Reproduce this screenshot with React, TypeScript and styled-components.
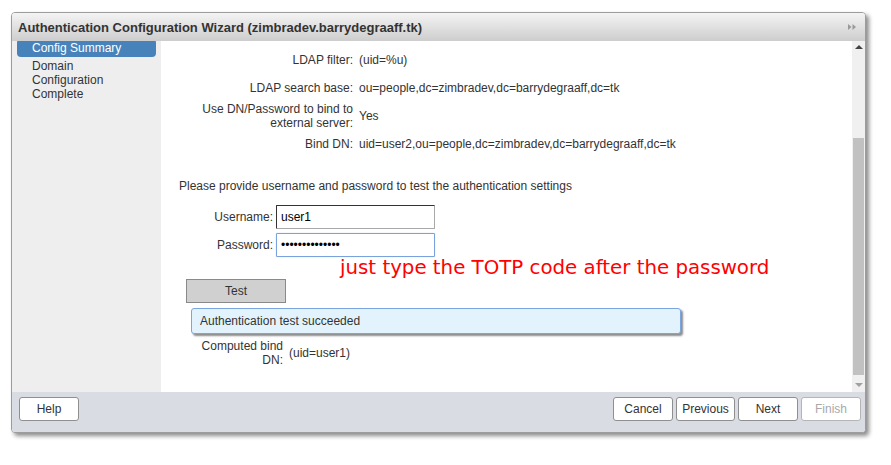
import React, { useEffect, useRef } from "react";
import styled, { createGlobalStyle } from "styled-components";

const Global = createGlobalStyle`
  html, body { margin: 0; padding: 0; background: #fff; }
  body { font-family: "Liberation Sans", Arial, sans-serif; font-size: 12px; color: #333; }
`;

const Page = styled.div`
  width: 891px;
  height: 465px;
  padding: 12px 0 0 11px;
  box-sizing: border-box;
`;

const Dialog = styled.div`
  width: 855px;
  height: 421px;
  box-sizing: border-box;
  border: 1px solid #9c9c9c;
  border-radius: 4px;
  box-shadow: 3px 3px 4px rgba(0, 0, 0, 0.45);
  display: flex;
  flex-direction: column;
  overflow: hidden;
  background: #fff;
`;

const TitleBar = styled.div`
  height: 28px;
  flex: none;
  display: flex;
  align-items: center;
  justify-content: space-between;
  padding: 0 8px 0 6px;
  background: linear-gradient(#f4f4f4, #cdcdcd);
  font-weight: bold;
  font-size: 13px;
  color: #333;
`;

const Body = styled.div`
  flex: 1;
  display: flex;
  min-height: 0;
`;

const Sidebar = styled.div`
  width: 149px;
  flex: none;
  background: #eeeeee;
  overflow: hidden;
`;

const NavList = styled.div`
  margin-top: -2px;
  display: flex;
  flex-direction: column;
`;

const NavItem = styled.div<{ $active?: boolean }>`
  margin: 0 5px;
  padding: 2px 30px 2px 15px;
  line-height: 14px;
  font-size: 12px;
  border-radius: 4px;
  background: ${(p) => (p.$active ? "#4783ba" : "transparent")};
  color: ${(p) => (p.$active ? "#fff" : "#333")};
`;

const Content = styled.div`
  flex: 1;
  padding: 5px 0 0 0;
  overflow: hidden;
`;

const InfoGrid = styled.div`
  display: grid;
  grid-template-columns: 163px 1fr;
  grid-auto-rows: 28px;
  column-gap: 6px;
  margin-left: 29px;
`;

const Label = styled.div`
  text-align: right;
  align-self: center;
  line-height: 14px;
`;

const Value = styled.div`
  align-self: center;
  line-height: 14px;
`;

const Prompt = styled.div`
  margin: 21px 0 0 18px;
  line-height: 14px;
`;

const FormGrid = styled.div`
  display: grid;
  grid-template-columns: 94px 159px;
  grid-auto-rows: 24px;
  column-gap: 3px;
  row-gap: 4px;
  margin: 12px 0 0 18px;
`;

const Input = styled.input<{ $focused?: boolean }>`
  box-sizing: border-box;
  width: 159px;
  height: 24px;
  margin: 0;
  padding: 0 4px;
  font-family: "Liberation Sans", Arial, sans-serif;
  font-size: 12px;
  color: #000;
  background: #fff;
  border: 1px solid ${(p) => (p.$focused ? "#7aa3de" : "#a8a8a8")};
  border-top-color: ${(p) => (p.$focused ? "#7aa3de" : "#333")};
  border-left-color: ${(p) => (p.$focused ? "#7aa3de" : "#333")};
  border-radius: 1px;
  outline: none;
  caret-color: #000;
  box-shadow: ${(p) => (p.$focused ? "0 0 1px #9cc0f0" : "none")};
`;

const Note = styled.div`
  margin: 0 0 0 179px;
  height: 22px;
  line-height: 22px;
  font-family: "DejaVu Sans", sans-serif;
  font-size: 19.8px;
  color: #ff0000;
  white-space: nowrap;
`;

const TestButton = styled.button`
  display: block;
  box-sizing: border-box;
  width: 100px;
  height: 24px;
  margin: 0 0 0 25px;
  background: #d0d0d0;
  border: 1px solid #8a8a8a;
  border-radius: 0;
  font-family: "Liberation Sans", Arial, sans-serif;
  font-size: 12px;
  color: #333;
  padding: 0;
`;

const Success = styled.div`
  box-sizing: border-box;
  width: 490px;
  height: 26px;
  margin: 5px 0 0 30px;
  padding: 0 8px;
  display: flex;
  align-items: center;
  background: #e2f3fd;
  border: 1px solid #7aa5df;
  border-radius: 3px;
  box-shadow: 2px 2px 2px rgba(0, 0, 0, 0.45);
  color: #333;
`;

const ResultGrid = styled.div`
  display: grid;
  grid-template-columns: 92px 1fr;
  column-gap: 6px;
  margin: 5px 0 0 30px;
  height: 28px;
`;

const Scrollbar = styled.div`
  width: 13px;
  flex: none;
  background: #f0f0f0;
  display: flex;
  flex-direction: column;
  align-items: center;
`;

const ArrowUp = styled.div`
  width: 0;
  height: 0;
  margin: 4px 0 0;
  border-left: 4px solid transparent;
  border-right: 4px solid transparent;
  border-bottom: 4px solid #444;
`;

const ArrowDown = styled.div`
  width: 0;
  height: 0;
  margin: 0 0 5px;
  border-left: 4px solid transparent;
  border-right: 4px solid transparent;
  border-top: 4px solid #a0a0a0;
`;

const Track = styled.div`
  flex: 1;
  width: 11px;
  display: flex;
  flex-direction: column;
  padding: 89px 0 8px;
`;

const Thumb = styled.div`
  flex: 1;
  background: #c1c1c1;
`;

const Footer = styled.div`
  height: 40px;
  flex: none;
  box-sizing: border-box;
  background: #d9dde3;
  display: flex;
  justify-content: space-between;
  align-items: flex-start;
  padding: 5px 4px 0 7px;
`;

const ButtonGroup = styled.div`
  display: flex;
  gap: 3px;
`;

const FooterButton = styled.button<{ $disabled?: boolean; $w?: number }>`
  box-sizing: border-box;
  width: ${(p) => p.$w ?? 60}px;
  height: 24px;
  padding: 0;
  margin: 0;
  background: #fff;
  border: 1px solid ${(p) => (p.$disabled ? "#b5b5b5" : "#8f8f8f")};
  border-radius: 3px;
  font-family: "Liberation Sans", Arial, sans-serif;
  font-size: 12px;
  color: ${(p) => (p.$disabled ? "#a9a9a9" : "#333")};
`;

const ExpandIcon = () => (
  <svg width="10" height="8" viewBox="0 0 10 8">
    <path d="M1 1 L4.5 4 L1 7 Z M5.5 1 L9 4 L5.5 7 Z" fill="#9a9a9a" />
  </svg>
);

export default function App() {
  const pwRef = useRef<HTMLInputElement>(null);
  useEffect(() => {
    const el = pwRef.current;
    if (el) {
      el.focus();
      el.setSelectionRange(el.value.length, el.value.length);
    }
  }, []);

  return (
    <>
      <Global />
      <Page>
        <Dialog>
          <TitleBar>
            <span>Authentication Configuration Wizard (zimbradev.barrydegraaff.tk)</span>
            <ExpandIcon />
          </TitleBar>
          <Body>
            <Sidebar>
              <NavList>
                <NavItem $active>Config Summary</NavItem>
                <NavItem>Domain Configuration Complete</NavItem>
              </NavList>
            </Sidebar>
            <Content>
              <InfoGrid>
                <Label>LDAP filter:</Label>
                <Value>(uid=%u)</Value>
                <Label>LDAP search base:</Label>
                <Value>ou=people,dc=zimbradev,dc=barrydegraaff,dc=tk</Value>
                <Label>Use DN/Password to bind to external server:</Label>
                <Value>Yes</Value>
                <Label>Bind DN:</Label>
                <Value>uid=user2,ou=people,dc=zimbradev,dc=barrydegraaff,dc=tk</Value>
              </InfoGrid>
              <Prompt>Please provide username and password to test the authentication settings</Prompt>
              <FormGrid>
                <Label>Username:</Label>
                <Input type="text" defaultValue="user1" />
                <Label>Password:</Label>
                <Input ref={pwRef} type="password" defaultValue="abcdefghijklmn" $focused />
              </FormGrid>
              <Note>just type the TOTP code after the password</Note>
              <TestButton>Test</TestButton>
              <Success>Authentication test succeeded</Success>
              <ResultGrid>
                <Label>Computed bind DN:</Label>
                <Value>(uid=user1)</Value>
              </ResultGrid>
            </Content>
            <Scrollbar>
              <ArrowUp />
              <Track>
                <Thumb />
              </Track>
              <ArrowDown />
            </Scrollbar>
          </Body>
          <Footer>
            <FooterButton>Help</FooterButton>
            <ButtonGroup>
              <FooterButton>Cancel</FooterButton>
              <FooterButton $w={59}>Previous</FooterButton>
              <FooterButton>Next</FooterButton>
              <FooterButton $disabled>Finish</FooterButton>
            </ButtonGroup>
          </Footer>
        </Dialog>
      </Page>
    </>
  );
}
